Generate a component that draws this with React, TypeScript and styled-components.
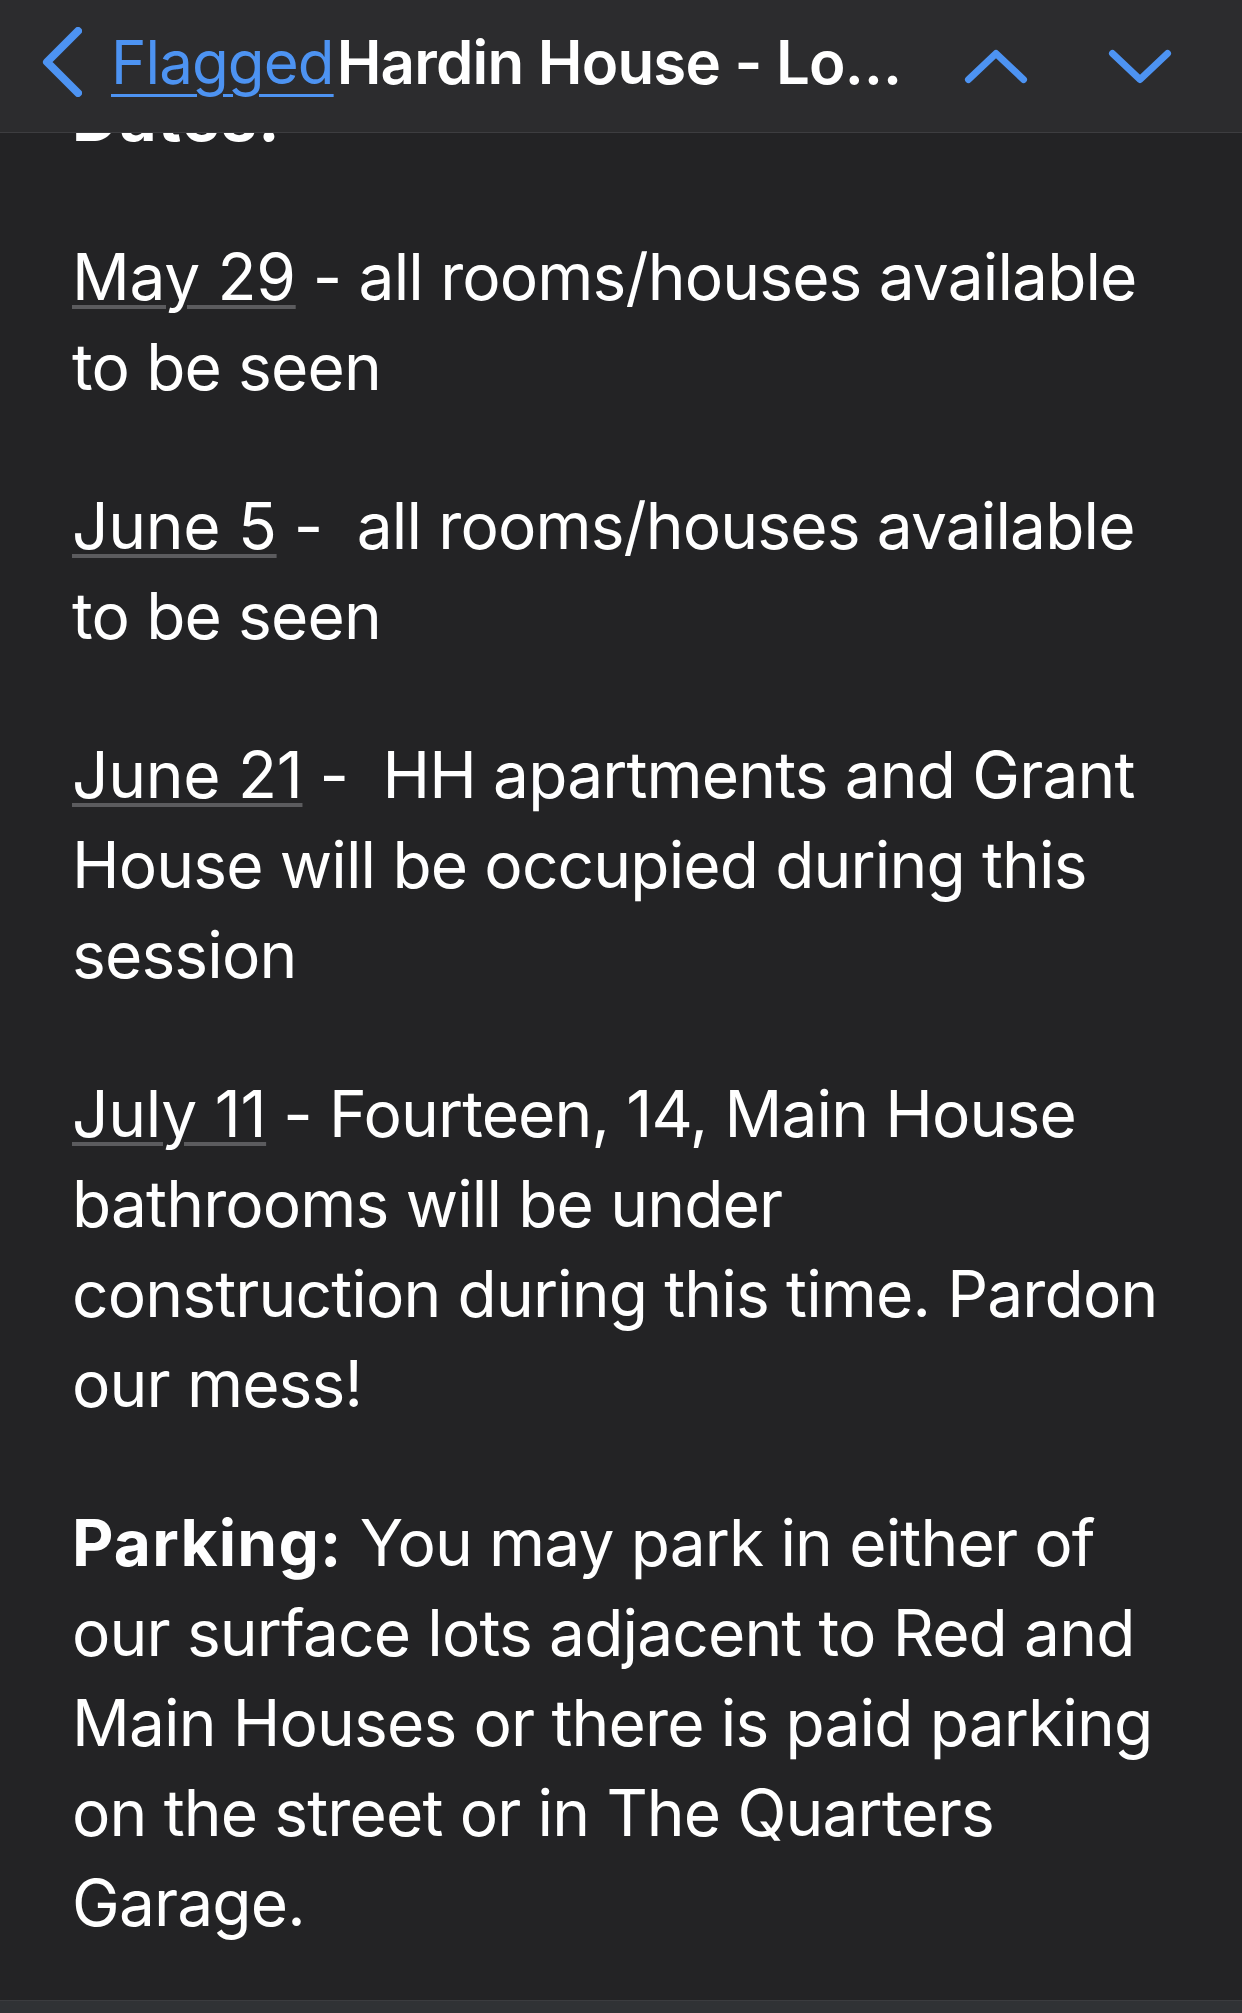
import React from "react";
import styled, { createGlobalStyle } from "styled-components";

const GlobalStyle = createGlobalStyle`
  html, body {
    margin: 0;
    padding: 0;
    background: #232325;
  }
  body {
    font-family: Inter, "Noto Sans", "Liberation Sans", sans-serif;
    -webkit-font-smoothing: antialiased;
  }
  * { box-sizing: border-box; }
`;

const Screen = styled.div`
  width: 1242px;
  height: 2013px;
  display: flex;
  flex-direction: column;
  background: #232325;
  overflow: hidden;
`;

const NavBar = styled.header`
  position: relative;
  z-index: 2;
  flex-shrink: 0;
  height: 133px;
  display: flex;
  align-items: center;
  padding: 0 68px 9px 42px;
  background: #2c2c2e;
  border-bottom: 1px solid #3d3d40;
`;

const BackButton = styled.div`
  display: flex;
  align-items: center;
  gap: 29px;
  color: #4d93f2;
`;

const BackLabel = styled.span`
  font-size: 60px;
  line-height: 60px;
  font-weight: 400;
  letter-spacing: -0.9px;
  text-decoration: underline;
  text-decoration-thickness: 3px;
  text-underline-offset: 10px;
  text-decoration-color: #4d93f2;
`;

const Title = styled.span`
  margin-left: 3px;
  font-size: 60px;
  line-height: 60px;
  font-weight: 600;
  letter-spacing: -0.8px;
  color: #ffffff;
  white-space: nowrap;
`;

const NavArrows = styled.div`
  margin-left: auto;
  padding-top: 9px;
  display: flex;
  align-items: center;
  gap: 76px;
`;

const Body = styled.main`
  flex: 1;
  overflow: hidden;
  padding: 0 40px 0 72px;
  color: #ffffff;
`;

const Paragraph = styled.p<{ $first?: boolean }>`
  margin: ${(p) => (p.$first ? "-60px" : "0")} 0 69px 0;
  font-size: 64px;
  line-height: 90px;
  font-weight: 400;
  letter-spacing: -0.85px;
  white-space: nowrap;
`;

const Strong = styled.strong`
  font-weight: 700;
  letter-spacing: 1.2px;
`;

const DateLink = styled.span`
  text-decoration: underline;
  text-decoration-color: #5b5b5e;
  text-decoration-thickness: 4px;
  text-underline-offset: 5px;
  text-decoration-skip-ink: auto;
  letter-spacing: -0.3px;
`;

const BottomBar = styled.footer`
  flex-shrink: 0;
  height: 13px;
  background: #303235;
  border-top: 1px solid #3b3c3f;
`;

const Chevron = ({ d, w, h }: { d: string; w: number; h: number }) => (
  <svg width={w} height={h} viewBox={`0 0 ${w} ${h}`} fill="none">
    <path
      d={d}
      stroke="#4d93f2"
      strokeWidth={w === 40 ? 8 : 7}
      strokeLinecap="round"
      strokeLinejoin="round"
    />
  </svg>
);

export default function App() {
  const sp = "\u00a0";
  return (
    <>
      <GlobalStyle />
      <Screen>
        <NavBar>
          <BackButton>
            <Chevron w={40} h={70} d="M36 4 L5 35 L36 66" />
            <BackLabel>Flagged</BackLabel>
          </BackButton>
          <Title>Hardin House - Lo…</Title>
          <NavArrows>
            <Chevron w={68} h={40} d="M6.5 33.5 L34 7.5 L61.5 33.5" />
            <Chevron w={68} h={40} d="M6.5 7.5 L34 33.5 L61.5 7.5" />
          </NavArrows>
        </NavBar>
        <Body>
          <Paragraph $first>
            <Strong>Dates:</Strong>
          </Paragraph>
          <Paragraph>
            <DateLink>May 29</DateLink> - all rooms/houses available
            <br />
            to be seen
          </Paragraph>
          <Paragraph>
            <DateLink>June 5</DateLink> -{sp} all rooms/houses available
            <br />
            to be seen
          </Paragraph>
          <Paragraph>
            <DateLink>June 21</DateLink> -{sp} HH apartments and Grant
            <br />
            House will be occupied during this
            <br />
            session
          </Paragraph>
          <Paragraph>
            <DateLink>July 11</DateLink> - Fourteen, 14, Main House
            <br />
            bathrooms will be under
            <br />
            construction during this time. Pardon
            <br />
            our mess!
          </Paragraph>
          <Paragraph>
            <Strong>Parking:</Strong> You may park in either of
            <br />
            our surface lots adjacent to Red and
            <br />
            Main Houses or there is paid parking
            <br />
            on the street or in The Quarters
            <br />
            Garage.
          </Paragraph>
        </Body>
        <BottomBar />
      </Screen>
    </>
  );
}
